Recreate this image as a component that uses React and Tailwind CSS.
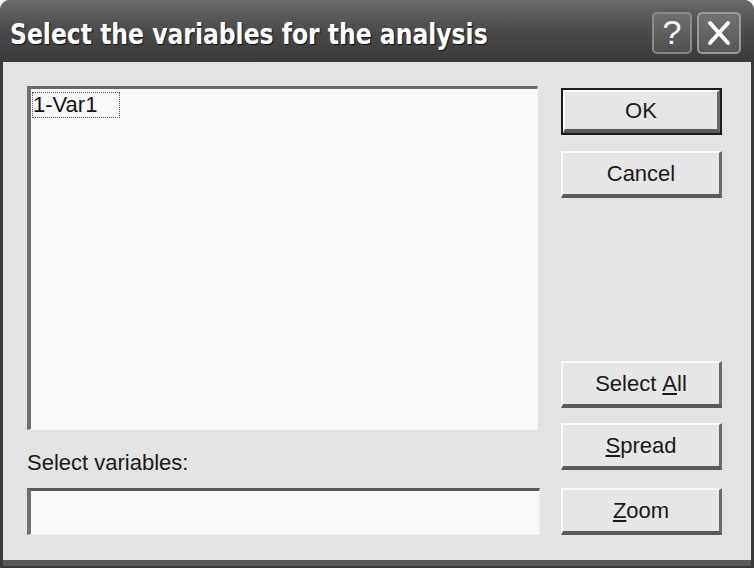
import React from "react";

const sans = { fontFamily: '"Liberation Sans", Arial, sans-serif' };

function Btn({ children, def, className = "" }) {
  const inner = (
    <div className="flex h-full w-full items-center justify-center border-t-2 border-l-2 border-t-[#fafafa] border-l-[#fafafa] border-r-[3px] border-b-[4px] border-r-[#6a6a6a] border-b-[#5a5a5a] bg-[#e6e6e6] text-[22px] text-[#1a1a1a]">
      {children}
    </div>
  );
  if (def) {
    return (
      <div className={"h-[47px] w-[161px] border-2 border-[#1c1c1c] " + className}>{inner}</div>
    );
  }
  return <div className={"h-[47px] w-[161px] " + className}>{inner}</div>;
}

export default function App() {
  return (
    <div className="h-[568px] w-[754px] bg-white" style={sans}>
      <div className="flex h-[568px] w-[754px] flex-col overflow-hidden rounded-t-[10px] bg-[#3a3a3a]">
        {/* title bar */}
        <div className="flex h-[62px] shrink-0 items-center bg-gradient-to-b from-[#6a6a6a] via-[#4a4a4a] to-[#3a3a3a] pl-[10px] pr-[13px] pt-[3px]">
          <div
            className="flex-1 origin-left scale-x-[0.9] pt-[4px] text-[29px] font-bold text-white [text-shadow:1px_1px_1px_#111]"
            style={{ fontFamily: '"DejaVu Sans Condensed", "DejaVu Sans", sans-serif' }}
          >
            Select the variables for the analysis
          </div>
          <div className="flex gap-[5px]">
            <div className="flex h-[42px] w-[40px] items-center justify-center rounded-[5px] border-2 border-[#8a8a8a] bg-gradient-to-b from-[#6e6e6e] to-[#505050] text-[34px] text-white">
              ?
            </div>
            <div className="flex h-[42px] w-[44px] items-center justify-center rounded-[5px] border-2 border-[#9a9a9a] bg-gradient-to-b from-[#727272] to-[#565656]">
              <svg width="26" height="26" viewBox="0 0 26 26">
                <path d="M4 3 L22 23 M22 3 L4 23" stroke="white" strokeWidth="4" strokeLinecap="round" />
              </svg>
            </div>
          </div>
        </div>
        {/* body */}
        <div className="mx-[3px] mb-[2px] flex flex-1 border-b-[6px] border-[#5a5a5a] bg-[#e3e3e3] pl-[24px] pr-[29px] pt-[24px]">
          <div className="flex w-[511px] flex-col">
            <div className="h-[344px] border-t-[3px] border-l-[4px] border-t-[#6a6a6a] border-l-[#707070] border-b border-r border-b-[#f4f4f4] border-r-[#f4f4f4] bg-[#f9f9f9] pl-[1px] pt-[3px]">
              <div className="inline-block border border-dotted border-[#555] pr-[22px] text-[22px] leading-[24px] text-[#111]">
                1-Var1
              </div>
            </div>
            <div className="mt-[20px] text-[22px] leading-[26px] text-[#1a1a1a]">Select variables:</div>
            <div className="mt-[12px] h-[47px] w-[513px] border-t-[3px] border-l-[4px] border-t-[#5a5a5a] border-l-[#707070] border-b border-r border-b-[#f4f4f4] border-r-[#f4f4f4] bg-[#f9f9f9]"></div>
          </div>
          <div className="ml-auto flex w-[161px] flex-col pt-[2px]">
            <Btn def>OK</Btn>
            <Btn className="mt-[16px]">Cancel</Btn>
            <div className="flex-1"></div>
            <Btn>
              Select <span className="ml-[6px] underline">A</span>ll
            </Btn>
            <Btn className="mt-[15px]">
              <span className="underline">S</span>pread
            </Btn>
            <Btn className="mt-[18px] mb-[25px]">
              <span className="underline">Z</span>oom
            </Btn>
          </div>
        </div>
      </div>
    </div>
  );
}
